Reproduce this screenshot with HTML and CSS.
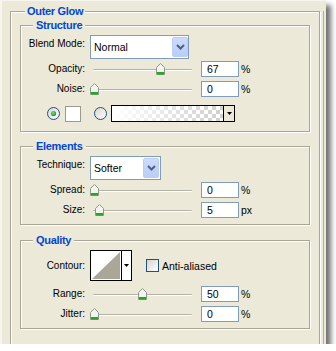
FILE: index.html
```html
<!DOCTYPE html>
<html>
<head>
<meta charset="utf-8">
<title>Outer Glow</title>
<link rel="stylesheet" href="styles.css">
</head>
<body>
<div class="panel">
  <fieldset class="group outer">
    <legend>Outer Glow</legend>

    <fieldset class="group inner structure">
      <legend>Structure</legend>
      <div class="row row-select">
        <span class="label">Blend Mode:</span>
        <div class="select select-blend">
          <span class="select-text">Normal</span>
          <span class="select-btn"><svg width="9" height="6" viewBox="0 0 9 6"><path d="M1 1 L4.5 4.5 L8 1" fill="none" stroke="#4d6185" stroke-width="2"/></svg></span>
        </div>
      </div>
      <div class="row">
        <span class="label">Opacity:</span>
        <div class="slider"><div class="track"></div><svg class="thumb" style="left:66px" width="9" height="12" viewBox="0 0 9 12"><path d="M0.5 4.5 L4.5 0.5 L8.5 4.5 L8.5 11.5 L0.5 11.5 Z" fill="#f4f4ee" stroke="#8a9a8a"/><rect x="1" y="9" width="7" height="2.5" fill="#22a822"/></svg></div>
        <div class="field">67</div><span class="unit">%</span>
      </div>
      <div class="row">
        <span class="label">Noise:</span>
        <div class="slider"><div class="track"></div><svg class="thumb" style="left:0px" width="9" height="12" viewBox="0 0 9 12"><path d="M0.5 4.5 L4.5 0.5 L8.5 4.5 L8.5 11.5 L0.5 11.5 Z" fill="#f4f4ee" stroke="#8a9a8a"/><rect x="1" y="9" width="7" height="2.5" fill="#22a822"/></svg></div>
        <div class="field">0</div><span class="unit">%</span>
      </div>
      <div class="color-row">
        <svg class="radio" width="13" height="13" viewBox="0 0 13 13"><defs><linearGradient id="rg1" x1="0" y1="0" x2="1" y2="1"><stop offset="0" stop-color="#d8d6cc"/><stop offset="1" stop-color="#ffffff"/></linearGradient><radialGradient id="dot" cx="0.4" cy="0.4" r="0.6"><stop offset="0" stop-color="#7ddc7d"/><stop offset="1" stop-color="#1e9a1e"/></radialGradient></defs><circle cx="6.5" cy="6.5" r="6" fill="url(#rg1)" stroke="#1c5180"/><circle cx="6.5" cy="6.5" r="2.6" fill="url(#dot)"/></svg>
        <span class="swatch"></span>
        <svg class="radio radio-2" width="13" height="13" viewBox="0 0 13 13"><circle cx="6.5" cy="6.5" r="6" fill="url(#rg1)" stroke="#1c5180"/></svg>
        <div class="gradient-pick">
          <span class="gradient"></span>
          <span class="pick-btn"><svg width="5" height="3" viewBox="0 0 5 3"><path d="M0 0 H5 L2.5 3 Z" fill="#000"/></svg></span>
        </div>
      </div>
    </fieldset>

    <fieldset class="group inner elements">
      <legend>Elements</legend>
      <div class="row row-select">
        <span class="label">Technique:</span>
        <div class="select select-tech">
          <span class="select-text">Softer</span>
          <span class="select-btn"><svg width="9" height="6" viewBox="0 0 9 6"><path d="M1 1 L4.5 4.5 L8 1" fill="none" stroke="#4d6185" stroke-width="2"/></svg></span>
        </div>
      </div>
      <div class="row">
        <span class="label">Spread:</span>
        <div class="slider"><div class="track"></div><svg class="thumb" style="left:0px" width="9" height="12" viewBox="0 0 9 12"><path d="M0.5 4.5 L4.5 0.5 L8.5 4.5 L8.5 11.5 L0.5 11.5 Z" fill="#f4f4ee" stroke="#8a9a8a"/><rect x="1" y="9" width="7" height="2.5" fill="#22a822"/></svg></div>
        <div class="field">0</div><span class="unit">%</span>
      </div>
      <div class="row">
        <span class="label">Size:</span>
        <div class="slider"><div class="track"></div><svg class="thumb" style="left:5px" width="9" height="12" viewBox="0 0 9 12"><path d="M0.5 4.5 L4.5 0.5 L8.5 4.5 L8.5 11.5 L0.5 11.5 Z" fill="#f4f4ee" stroke="#8a9a8a"/><rect x="1" y="9" width="7" height="2.5" fill="#22a822"/></svg></div>
        <div class="field">5</div><span class="unit">px</span>
      </div>
    </fieldset>

    <fieldset class="group inner quality">
      <legend>Quality</legend>
      <div class="row row-contour">
        <span class="label">Contour:</span>
        <div class="contour">
          <svg class="contour-img" width="30" height="29" viewBox="0 0 30 29"><rect width="30" height="29" fill="#fff"/><path d="M1 28 L29 1 L29 28 Z" fill="#aba798"/></svg>
          <span class="contour-btn"><svg width="5" height="3" viewBox="0 0 5 3"><path d="M0 0 H5 L2.5 3 Z" fill="#000"/></svg></span>
        </div>
        <span class="checkbox"></span>
        <span class="check-label">Anti-aliased</span>
      </div>
      <div class="row">
        <span class="label">Range:</span>
        <div class="slider"><div class="track"></div><svg class="thumb" style="left:48px" width="9" height="12" viewBox="0 0 9 12"><path d="M0.5 4.5 L4.5 0.5 L8.5 4.5 L8.5 11.5 L0.5 11.5 Z" fill="#f4f4ee" stroke="#8a9a8a"/><rect x="1" y="9" width="7" height="2.5" fill="#22a822"/></svg></div>
        <div class="field">50</div><span class="unit">%</span>
      </div>
      <div class="row">
        <span class="label">Jitter:</span>
        <div class="slider"><div class="track"></div><svg class="thumb" style="left:0px" width="9" height="12" viewBox="0 0 9 12"><path d="M0.5 4.5 L4.5 0.5 L8.5 4.5 L8.5 11.5 L0.5 11.5 Z" fill="#f4f4ee" stroke="#8a9a8a"/><rect x="1" y="9" width="7" height="2.5" fill="#22a822"/></svg></div>
        <div class="field">0</div><span class="unit">%</span>
      </div>
    </fieldset>
  </fieldset>
</div>
</body>
</html>
```
FILE: styles.css
```css
html, body {
  margin: 0;
  padding: 0;
  background: #ffffff;
}

body {
  font-family: "Liberation Sans", Arial, sans-serif;
  font-size: 10px;
  color: #000;
}

.panel {
  width: 326px;
  height: 344px;
  box-sizing: border-box;
  padding-top: 5px;
  background: #ece9d8;
  border-top: 1px solid #f6f5ef;
  border-left: 2px solid #f6f5ef;
  overflow: hidden;
  box-shadow: 5px 5px 5px rgba(0, 0, 0, 0.55);
}

.group {
  margin: 0;
  padding: 0;
  min-width: 0;
  border: 1px solid #a9a697;
  box-shadow: inset 1px 1px 0 #ffffff, 1px 1px 0 #ffffff;
}

.group > legend {
  padding: 0 3px;
  margin-left: 13px;
  font-weight: bold;
  font-size: 11px;
  letter-spacing: -0.3px;
  line-height: 13px;
  color: #0046d5;
  background: #ece9d8;
}

.outer {
  margin: -1px 6px 0 8px;
  padding-bottom: 20px;
  box-shadow: inset 1px 1px 0 #ffffff, 1px 1px 0 #ffffff, 3px 0 0 #ece9d8, 4px 0 0 #b3b0a2;
}

.outer > legend {
  margin-left: 14px;
  padding: 0 2px;
}

.inner {
  margin: 0 9px;
}

.inner > legend {
  margin-left: 12px;
}

.structure {
  margin-top: 1px;
  padding-bottom: 9px;
}

.elements {
  margin-top: 8px;
  padding-bottom: 4px;
}

.quality {
  margin-top: 9px;
  padding-bottom: 4px;
}

.row {
  display: flex;
  align-items: center;
  height: 20px;
}

.label {
  width: 64px;
  margin-right: 5px;
  text-align: right;
  line-height: 12px;
  white-space: nowrap;
}

.row-select {
  height: 24px;
  margin-top: 3px;
  align-items: flex-start;
}

.row-select .label {
  padding-top: 3px;
}

.select {
  box-sizing: border-box;
  height: 24px;
  display: flex;
  align-items: stretch;
  border: 1px solid #7f9db9;
  background: #ffffff;
}

.select-blend { width: 99px; }
.select-tech { width: 71px; padding-right: 1px; }

.select-text {
  flex: 1;
  padding-left: 3px;
  line-height: 22px;
  font-size: 10.5px;
}

.select-btn {
  width: 16px;
  margin: 1px 0;
  box-sizing: border-box;
  border-radius: 2px;
  background: linear-gradient(#cddbfc, #b9cdf7);
  border: 1px solid #bccdf3;
  display: flex;
  align-items: center;
  justify-content: center;
}

.slider {
  position: relative;
  width: 108px;
  height: 20px;
  flex: none;
}

.track {
  position: absolute;
  left: 3px;
  top: 10px;
  width: 99px;
  height: 0;
  border-top: 1px solid #b4b3a8;
  border-bottom: 1px solid #ffffff;
  border-radius: 1px;
}

.thumb {
  position: absolute;
  top: 4px;
}

.field {
  box-sizing: border-box;
  width: 38px;
  height: 16px;
  margin-left: 3px;
  border: 1px solid #7f9db9;
  background: #ffffff;
  padding-left: 5px;
  line-height: 14px;
  font-size: 10.5px;
}

.unit {
  margin-left: 2px;
  font-size: 10.5px;
}

.color-row {
  display: flex;
  align-items: center;
  height: 17px;
  margin-top: 6px;
  padding-left: 26px;
}

.radio {
  flex: none;
}

.swatch {
  box-sizing: border-box;
  width: 16px;
  height: 16px;
  margin-left: 5px;
  border: 1px solid #9c9a90;
  background: #ffffff;
}

.radio-2 {
  margin-left: 13px;
}

.gradient-pick {
  box-sizing: border-box;
  display: flex;
  width: 124px;
  height: 17px;
  margin-left: 4px;
  border: 1px solid #000000;
}

.gradient {
  flex: 1;
  background-image:
    linear-gradient(to right, #ffffff 0%, rgba(255, 255, 255, 0) 100%),
    conic-gradient(#cfcfcf 25%, #ffffff 0 50%, #cfcfcf 0 75%, #ffffff 0);
  background-size: 100% 100%, 8px 8px;
}

.pick-btn {
  width: 10px;
  border-left: 1px solid #000000;
  background: #ece9d8;
  display: flex;
  align-items: center;
  justify-content: center;
}

.row-contour {
  height: 31px;
  margin-top: 3px;
  margin-bottom: 3px;
}

.contour {
  box-sizing: border-box;
  display: flex;
  width: 42px;
  height: 31px;
  border: 1px solid #000000;
  background: #ffffff;
}

.contour-img {
  display: block;
}

.contour-btn {
  flex: 1;
  border-left: 1px solid #000000;
  display: flex;
  align-items: center;
  justify-content: center;
}

.checkbox {
  box-sizing: border-box;
  width: 13px;
  height: 13px;
  margin-left: 14px;
  border: 1px solid #1c5180;
  background: linear-gradient(135deg, #d6d4ca, #ffffff);
}

.check-label {
  margin-left: 3px;
  font-size: 10.5px;
}
```
